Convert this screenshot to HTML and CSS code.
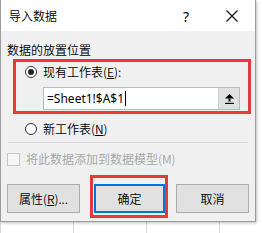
FILE: index.html
```html
<!DOCTYPE html>
<html>
<head>
<meta charset="utf-8">
<title>导入数据</title>
<link rel="stylesheet" href="styles.css">
</head>
<body>
<!--背景表格-->
<div id="sheet">
  <!--对话框-->
  <div id="dialog">
    <div class="titlebar">
      <span class="title">导入数据</span>
      <span class="capbtn help">?</span>
      <span class="capbtn close">
        <svg width="12" height="12" viewBox="0 0 12 12"><path d="M0.5 0.5L11.5 11.5M11.5 0.5L0.5 11.5" stroke="#111" stroke-width="1.1" fill="none"/></svg>
      </span>
    </div>
    <div class="content">
      <p class="group">数据的放置位置</p>
      <!--红框标注区-->
      <div class="markbox">
        <div class="radio checked"><i class="dot"></i>现有工作表(<u>E</u>):</div>
        <div class="ref">
          <span class="reftext">=Sheet1!$A$1<i class="caret"></i></span>
          <span class="refbtn">
            <svg width="9" height="10" viewBox="0 0 9 10"><path d="M4.5 0L9 4.6H0Z" fill="#000"/><rect x="3.5" y="4.5" width="2" height="3" fill="#000"/><rect x="0" y="8.8" width="9" height="1.2" fill="#000"/></svg>
          </span>
        </div>
      </div>
      <div class="radio newsheet"><i class="dot"></i>新工作表(<u>N</u>)</div>
      <div class="sep"></div>
      <div class="check disabled"><i class="box"></i>将此数据添加到数据模型(M)</div>
      <div class="btns">
        <button class="btn">属性(<u>R</u>)...</button>
        <span class="okwrap">
          <button class="btn default">确定</button>
          <i class="okmark"></i>
        </span>
        <button class="btn">取消</button>
      </div>
    </div>
  </div>
</div>
</body>
</html>
```

FILE: styles.css
```css
/*清除默认样式*/
body,div,p{padding:0; margin:0;}
body{background:#fff; font-family:"Noto Sans CJK SC","Noto Sans",sans-serif; font-size:12px; font-weight:350; color:#000;}
u{text-decoration:underline; text-underline-offset:1px;}
/*背景表格*/
#sheet{width:262px; height:233px; overflow:hidden; background-color:#fff;
  background-image:linear-gradient(to right,#d8d8d8 1px,transparent 1px);
  background-size:73px 100%; background-position:0 0;}
/*对话框*/
#dialog{width:254px; height:221px; background:#f0f0f0; border:1px solid #9c9c9c; border-top:none; box-shadow:1px 1px 3px rgba(0,0,0,.25);}
.titlebar{height:31px; background:#fff; display:flex; align-items:center;}
.title{flex:1; padding-left:8px; line-height:16px;}
.capbtn{width:46px; height:31px; display:flex; align-items:center; justify-content:center;}
.help{font-family:"Noto Sans",sans-serif; font-size:14px; font-weight:400; padding-top:1px;}
.close svg{display:block;}
.content{padding:11px 5px 8px 6px;}
.group{line-height:16px; height:16px;}
/*红框*/
.markbox{margin:1px 0 0 6px; width:232px; height:49px; border:3px solid #e5393b;}
.radio{height:18px; display:flex; align-items:center; line-height:16px;}
.radio .dot{width:10px; height:10px; border:1px solid #333; border-radius:50%; background:#fff; margin:0 6px 0 0; position:relative;}
.markbox .radio{margin:1px 0 0 9px;}
.radio.checked .dot::after{content:""; position:absolute; left:2px; top:2px; width:6px; height:6px; border-radius:50%; background:#222;}
.ref{margin:6px 0 0 27px; width:195px; height:21px; border:1px solid #b9b9b9; background:#fff; display:flex;}
.reftext{flex:1; padding-left:3px; font-family:"Noto Sans",sans-serif; font-size:12px; font-weight:400; line-height:21px; display:flex; align-items:center;}
.caret{display:inline-block; width:1px; height:15px; background:#000; margin-left:1px;}
.refbtn{width:20px; height:21px; background:#e1e1e1; border-left:1px solid #cfcfcf; display:flex; align-items:center; justify-content:center;}
.refbtn svg{display:block;}
.newsheet{margin:6px 0 0 18px;}
.sep{margin:4px 2px 0 1px; height:1px; background:#d9d9d9;}
.check{margin-top:7px; height:18px; display:flex; align-items:center; line-height:16px;}
.check .box{width:11px; height:11px; border:1px solid #c6c6c6; background:#f7f7f7; margin-right:6px;}
.disabled{color:#a3a3a3;}
/*按钮*/
.btns{margin-top:16px; display:flex; justify-content:space-between; padding-right:1px;}
.btn{width:73px; height:29px; margin:0; padding:0; background:#e1e1e1; border:1px solid #adadad; font-family:"Noto Sans CJK SC","Noto Sans",sans-serif; font-size:12px; font-weight:350; color:#000; line-height:16px;}
.btn.default{width:71px; border:2px solid #0078d7;}
.okwrap{position:relative; display:block; margin-left:3px;}
.okmark{position:absolute; left:-4px; top:-9px; width:72px; height:37px; border:3px solid #e5393b;}
```
